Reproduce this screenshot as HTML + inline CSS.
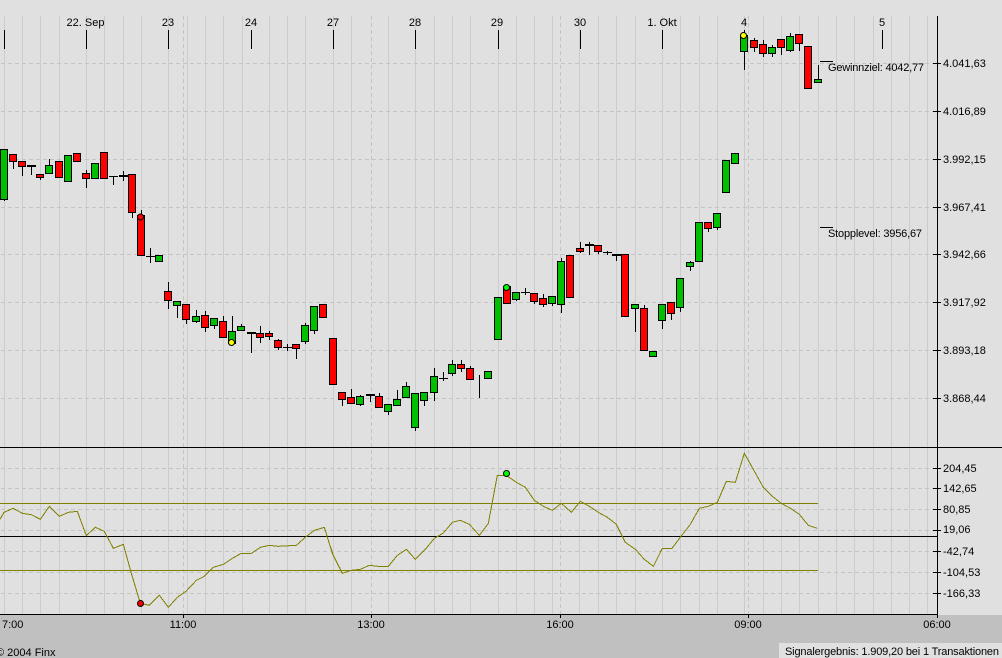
<!DOCTYPE html>
<html><head><meta charset="utf-8"><style>
html,body{margin:0;padding:0;background:#e0e0e0}
svg{display:block}
text{font-family:"Liberation Sans",sans-serif;font-size:11px;fill:#000}
.s{shape-rendering:crispEdges}
.s rect{width:7px;stroke:#000;stroke-width:1}
.g{fill:#00bf00}.r{fill:#f00}
</style></head><body>
<svg width="1002" height="658" viewBox="0 0 1002 658" xmlns="http://www.w3.org/2000/svg">
<rect width="1002" height="658" fill="#e0e0e0"/>
<rect y="615" width="1002" height="43" fill="#c0c0c0"/>
<rect x="779" y="643" width="223" height="15" fill="#e0e0e0"/>
<g class="s" fill="none">
<path stroke="#ccc" d="M4.5 16V614M22.5 16V614M40.5 16V614M59.5 16V614M86.5 16V614M104.5 16V614M123.5 16V614M141.5 16V614M168.5 16V614M187.5 16V614M205.5 16V614M223.5 16V614M242.5 16V614M269.5 16V614M287.5 16V614M305.5 16V614M333.5 16V614M351.5 16V614M388.5 16V614M415.5 16V614M434.5 16V614M452.5 16V614M470.5 16V614M498.5 16V614M516.5 16V614M534.5 16V614M552.5 16V614M579.5 16V614M598.5 16V614M616.5 16V614M635.5 16V614M662.5 16V614M680.5 16V614M699.5 16V614M717.5 16V614M744.5 16V614M763.5 16V614M781.5 16V614M799.5 16V614M818.5 16V614M836.5 16V614M854.5 16V614M873.5 16V614M891.5 16V614M909.5 16V614M927.5 16V614"/>
<path stroke="#c4c4c4" stroke-dasharray="4 3" d="M183.5 16V614M371.5 16V614M560.5 16V614M748.5 16V614"/>
<path stroke="#c4c4c4" stroke-dasharray="4 3" d="M1 63.5H933M1 111.5H933M1 159.5H933M1 207.5H933M1 254.5H933M1 302.5H933M1 350.5H933M1 398.5H933M1 468.5H933M1 488.5H933M1 509.5H933M1 530.5H933M1 551.5H933M1 572.5H933M1 593.5H933"/>
<path stroke="#808000" d="M0 503.5H818M0 570.5H818"/>
<path stroke="#000" d="M0 447.5H1002M0 536.5H937M0 614.5H937M937.5 16V615"/>
<path stroke="#000" d="M933 63.5H941M933 111.5H941M933 159.5H941M933 207.5H941M933 254.5H941M933 302.5H941M933 350.5H941M933 398.5H941M933 468.5H941M933 488.5H941M933 509.5H941M933 530.5H941M933 551.5H941M933 572.5H941M933 593.5H941"/>
<path stroke="#000" d="M4.5 30V49M86.5 30V49M168.5 30V49M251.5 30V49M333.5 30V49M415.5 30V49M498.5 30V49M580.5 30V49M662.5 30V49M744.5 30V49M882.5 30V49M183.5 614V618M371.5 614V618M560.5 614V618M748.5 614V618M937.5 614V618M820 61.5H833M820 227.5H833"/>
</g>
<g class="s">
<path fill="none" stroke="#000" d="M4.5 199V201M13.5 161V169M22.5 166V176M31.5 166V175M40.5 177V180M49.5 159V174M59.5 177V178M68.5 181V182M77.5 161V162M86.5 170V188M95.5 178V179M104.5 178V179M113.5 176V185M123.5 171V181M132.5 212V218M141.5 210V256M150.5 248V263M159.5 261V262M168.5 282V309M177.5 305V318M186.5 319V324M196.5 310V323M205.5 311V332M214.5 325V329M223.5 316V338M232.5 316V345M241.5 324V331M251.5 333V353M260.5 326V343M269.5 331V340M278.5 339V350M287.5 344V351M296.5 348V359M305.5 323V344M314.5 330V334M323.5 317V318M333.5 384V385M342.5 399V406M351.5 389V404M360.5 395V406M370.5 395V402M379.5 393V408M388.5 411V415M397.5 390V406M406.5 382V398M415.5 427V431M424.5 400V406M434.5 368V401M443.5 372V381M452.5 360V376M461.5 360V372M470.5 366V380M479.5 375V398M488.5 378V379M498.5 339V340M507.5 303V304M516.5 299V301M525.5 288V295M534.5 301V304M543.5 294V307M552.5 303V306M561.5 258V313M570.5 297V298M580.5 242V253M589.5 242V255M598.5 251V254M607.5 251V255M616.5 255V261M625.5 316V317M635.5 308V332M644.5 305V351M653.5 356V357M662.5 320V329M671.5 313V320M680.5 307V312M690.5 261V271M699.5 261V262M708.5 228V232M717.5 227V230M726.5 192V193M735.5 163V164M744.5 30V70M754.5 38V52M763.5 40V57M772.5 45V57M781.5 47V55M790.5 33V52M799.5 43V51M808.5 88V89M818.5 65V83"/>
<path fill="none" stroke="#000" d="M109 176.5H118M146 256.5H155M283 347.5H292M439 378.5H448M521 292.5H530M603 252.5H612"/>
<path fill="none" stroke="#000" stroke-width="2" d="M27 166H36M119 176H128M247 333H256M366 395H375M585 245H594M612 255H621"/>
<rect class="g" x=".5" y="149.5" height="50"/>
<rect class="r" x="9.5" y="154.5" height="7"/>
<rect class="r" x="18.5" y="161.5" height="5"/>
<rect class="r" x="36.5" y="174.5" height="3"/>
<rect class="g" x="45.5" y="165.5" height="8"/>
<rect class="r" x="55.5" y="161.5" height="16"/>
<rect class="g" x="64.5" y="155.5" height="26"/>
<rect class="r" x="73.5" y="153.5" height="8"/>
<rect class="r" x="82.5" y="173.5" height="5"/>
<rect class="g" x="91.5" y="163.5" height="15"/>
<rect class="r" x="100.5" y="152.5" height="26"/>
<rect class="r" x="128.5" y="174.5" height="38"/>
<rect class="r" x="137.5" y="215.5" height="40"/>
<rect class="g" x="155.5" y="255.5" height="6"/>
<rect class="r" x="164.5" y="291.5" height="9"/>
<rect class="g" x="173.5" y="301.5" height="4"/>
<rect class="r" x="182.5" y="304.5" height="15"/>
<rect class="g" x="192.5" y="316.5" height="5"/>
<rect class="r" x="201.5" y="315.5" height="12"/>
<rect class="g" x="210.5" y="318.5" height="7"/>
<rect class="r" x="219.5" y="321.5" height="16"/>
<rect class="g" x="228.5" y="331.5" height="12"/>
<rect class="g" x="237.5" y="326.5" height="4"/>
<rect class="r" x="256.5" y="333.5" height="4"/>
<rect class="r" x="265.5" y="333.5" height="3"/>
<rect class="r" x="274.5" y="340.5" height="7"/>
<rect class="r" x="292.5" y="344.5" height="4"/>
<rect class="g" x="301.5" y="325.5" height="16"/>
<rect class="g" x="310.5" y="306.5" height="24"/>
<rect class="r" x="319.5" y="304.5" height="13"/>
<rect class="r" x="329.5" y="338.5" height="46"/>
<rect class="r" x="338.5" y="392.5" height="7"/>
<rect class="r" x="347.5" y="397.5" height="6"/>
<rect class="g" x="356.5" y="396.5" height="8"/>
<rect class="r" x="375.5" y="396.5" height="11"/>
<rect class="g" x="384.5" y="404.5" height="7"/>
<rect class="g" x="393.5" y="399.5" height="6"/>
<rect class="g" x="402.5" y="386.5" height="11"/>
<rect class="g" x="411.5" y="393.5" height="34"/>
<rect class="g" x="420.5" y="392.5" height="8"/>
<rect class="g" x="430.5" y="376.5" height="16"/>
<rect class="g" x="448.5" y="364.5" height="9"/>
<rect class="r" x="457.5" y="364.5" height="4"/>
<rect class="r" x="466.5" y="368.5" height="11"/>
<rect class="g" x="484.5" y="371.5" height="7"/>
<rect class="g" x="494.5" y="297.5" height="42"/>
<rect class="r" x="503.5" y="286.5" height="17"/>
<rect class="g" x="512.5" y="292.5" height="7"/>
<rect class="r" x="530.5" y="293.5" height="8"/>
<rect class="r" x="539.5" y="298.5" height="6"/>
<rect class="g" x="548.5" y="296.5" height="7"/>
<rect class="g" x="557.5" y="261.5" height="43"/>
<rect class="r" x="566.5" y="255.5" height="42"/>
<rect class="r" x="576.5" y="248.5" height="3"/>
<rect class="r" x="594.5" y="245.5" height="6"/>
<rect class="r" x="621.5" y="254.5" height="62"/>
<rect class="g" x="631.5" y="304.5" height="4"/>
<rect class="r" x="640.5" y="308.5" height="42"/>
<rect class="g" x="649.5" y="351.5" height="5"/>
<rect class="g" x="658.5" y="304.5" height="16"/>
<rect class="r" x="667.5" y="302.5" height="11"/>
<rect class="g" x="676.5" y="278.5" height="29"/>
<rect class="g" x="686.5" y="262.5" height="4"/>
<rect class="g" x="695.5" y="222.5" height="39"/>
<rect class="r" x="704.5" y="222.5" height="6"/>
<rect class="g" x="713.5" y="213.5" height="14"/>
<rect class="g" x="722.5" y="160.5" height="32"/>
<rect class="g" x="731.5" y="153.5" height="10"/>
<rect class="g" x="740.5" y="35.5" height="16"/>
<rect class="r" x="750.5" y="40.5" height="7"/>
<rect class="r" x="759.5" y="44.5" height="9"/>
<rect class="g" x="768.5" y="47.5" height="6"/>
<rect class="r" x="777.5" y="39.5" height="8"/>
<rect class="g" x="786.5" y="36.5" height="14"/>
<rect class="r" x="795.5" y="34.5" height="9"/>
<rect class="r" x="804.5" y="46.5" height="42"/>
<rect class="g" x="814.5" y="79.5" height="3"/>
</g>
<g fill="none" stroke="#808000" stroke-width="3" class="s">
<polyline transform="translate(0 440) scale(.33333)" points="0,238 12,217 39,205 67,220 94,224 121,238 148,199 178,229 205,217 232,214 259,287 286,262 313,274 340,325 370,313 394,400 421,490 448,496 478,466 505,502 532,472 559,453 589,421 613,409 640,382 670,373 697,355 724,340 754,340 781,322 808,316 835,319 889,316 916,292 943,271 973,262 997,340 1020,385"/>
<polyline transform="translate(330 440) scale(.33333)" points="0,316 10,346 37,400 64,391 91,388 118,376 145,379 175,379 202,346 229,328 256,358 286,328 313,295 340,279 367,247 391,241 418,253 448,286 475,250 502,106 529,106 559,127 586,142 613,181 640,199 667,211 694,190 724,217 751,184 778,199 805,217 832,232 859,253 886,307 916,328 943,358 970,379 997,325 1020,325"/>
<polyline transform="translate(660 440) scale(.33333)" points="0,337 7,325 36,325 63,289 91,253 118,205 145,199 172,187 199,124 226,127 253,40 280,88 310,142 337,169 364,190 391,205 418,223 445,256 472,265"/>
</g>
<g stroke="#000">
<circle cx="140.5" cy="217" r="3" fill="#f00"/>
<circle cx="231.5" cy="342.5" r="3" fill="#ff0"/>
<circle cx="506.5" cy="287.5" r="3" fill="#0f0"/>
<circle cx="743.5" cy="35.5" r="3" fill="#ff0"/>
<circle cx="140.5" cy="603.5" r="3" fill="#f00"/>
<circle cx="506.5" cy="473.5" r="3" fill="#0f0"/>
</g>
<g text-anchor="middle">
<text x="85.5" y="26">22. Sep</text>
<text x="168" y="26">23</text>
<text x="251" y="26">24</text>
<text x="333" y="26">27</text>
<text x="415" y="26">28</text>
<text x="497" y="26">29</text>
<text x="580" y="26">30</text>
<text x="662" y="26">1. Okt</text>
<text x="744" y="26">4</text>
<text x="882" y="26">5</text>
<text x="183" y="628">11:00</text>
<text x="371" y="628">13:00</text>
<text x="560" y="628">16:00</text>
<text x="748" y="628">09:00</text>
<text x="937" y="628">06:00</text>
</g>
<text x="2" y="628">7:00</text>
<text x="-4" y="656">© 2004 Finx</text>
<text x="785" y="655" textLength="214" lengthAdjust="spacing">Signalergebnis: 1.909,20 bei 1 Transaktionen</text>
<text x="828" y="71" textLength="96" lengthAdjust="spacing">Gewinnziel: 4042,77</text>
<text x="828" y="237" textLength="94" lengthAdjust="spacing">Stopplevel: 3956,67</text>
<g>
<text x="943" y="67">4.041,63</text>
<text x="943" y="115">4.016,89</text>
<text x="943" y="163">3.992,15</text>
<text x="943" y="211">3.967,41</text>
<text x="943" y="258">3.942,66</text>
<text x="943" y="306">3.917,92</text>
<text x="943" y="354">3.893,18</text>
<text x="943" y="402">3.868,44</text>
<text x="943" y="472">204,45</text>
<text x="943" y="492">142,65</text>
<text x="943" y="513">80,85</text>
<text x="943" y="533">19,06</text>
<text x="943" y="555">-42,74</text>
<text x="943" y="576">-104,53</text>
<text x="943" y="597">-166,33</text>
</g>
</svg>
</body></html>
